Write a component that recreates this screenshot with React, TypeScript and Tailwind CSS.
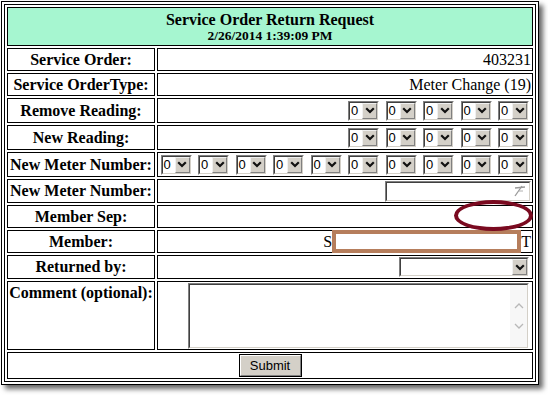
import React from "react";

const serif = { fontFamily: '"Liberation Serif", "Times New Roman", serif' };
const sans = { fontFamily: '"Liberation Sans", Arial, sans-serif' };

function Chevron({ color = "#000" }: { color?: string }) {
  return (
    <svg width="10" height="7" viewBox="0 0 10 7">
      <path d="M1.2 1.2 L5 5 L8.8 1.2" fill="none" stroke={color} strokeWidth="2.2" />
    </svg>
  );
}

function DropBtn() {
  return (
    <div className="flex h-full w-[15px] items-center justify-center border border-t-[#f0f0f0] border-l-[#f0f0f0] border-r-[#808080] border-b-[#808080] bg-[#d4d0c8]">
      <Chevron color="#111" />
    </div>
  );
}

function Inset({ className, children }: { className: string; children?: React.ReactNode }) {
  return (
    <div className={"border border-t-[#808080] border-l-[#808080] border-r-white border-b-white " + className}>
      <div className="flex h-full w-full border border-t-[#404040] border-l-[#404040] border-r-[#d4d0c8] border-b-[#d4d0c8] bg-white">
        {children}
      </div>
    </div>
  );
}

function Sel() {
  return (
    <Inset className="h-[20px] w-[31px] shrink-0">
      <div className="flex flex-1 items-center pl-[1px] text-[13px] leading-none text-black" style={sans}>
        0
      </div>
      <DropBtn />
    </Inset>
  );
}

function Label({ children, top = false }: { children: React.ReactNode; top?: boolean }) {
  return (
    <div
      className={
        "flex justify-center whitespace-nowrap border border-black text-[16px] font-bold leading-none text-black " +
        (top ? "items-start pt-[3px]" : "items-center")
      }
      style={serif}
    >
      {children}
    </div>
  );
}

function Value({ children, className = "" }: { children?: React.ReactNode; className?: string }) {
  return (
    <div
      className={"flex items-center justify-end border border-black text-[16px] leading-none text-black " + className}
      style={serif}
    >
      {children}
    </div>
  );
}

export default function App() {
  return (
    <div className="h-[395px] w-[548px] overflow-hidden bg-white pl-[1px] pt-[1px]">
      <div className="w-[538px] border border-black bg-white p-[2px] shadow-[4px_4px_5px_rgba(0,0,0,0.6)]">
        <div className="border border-black p-[2px]">
          <div className="grid grid-cols-[148px_376px] grid-rows-[39px_23px_23px_25px_25px_25px_24px_23px_23px_24px_69px_27px] gap-[2px]">
            <div
              className="col-span-2 flex flex-col items-center justify-center border border-black bg-[#a6f6d0] text-black"
              style={serif}
            >
              <div className="text-[16px] font-bold leading-[18px]">Service Order Return Request</div>
              <div className="text-[13.5px] font-bold leading-[14px]">2/26/2014 1:39:09 PM</div>
            </div>

            <Label>Service Order:</Label>
            <Value className="pr-[1px]">403231</Value>

            <Label>Service OrderType:</Label>
            <Value className="pr-[1px]">Meter Change (19)</Value>

            <Label>Remove Reading:</Label>
            <Value className="gap-[6.5px] pr-[3px]">
              <Sel />
              <Sel />
              <Sel />
              <Sel />
              <Sel />
            </Value>

            <Label>New Reading:</Label>
            <Value className="gap-[6.5px] pr-[3px]">
              <Sel />
              <Sel />
              <Sel />
              <Sel />
              <Sel />
            </Value>

            <Label>New Meter Number:</Label>
            <Value className="gap-[6.5px] pr-[3px]">
              <Sel />
              <Sel />
              <Sel />
              <Sel />
              <Sel />
              <Sel />
              <Sel />
              <Sel />
              <Sel />
              <Sel />
            </Value>

            <Label>New Meter Number:</Label>
            <Value className="pr-[1px]">
              <Inset className="h-[21px] w-[146px]">
                <div className="flex flex-1 items-center justify-end pr-[3px]">
                  <svg width="16" height="12" viewBox="0 0 16 12">
                    <path d="M5 3 L15 2" stroke="#9a9a9a" strokeWidth="1.3" fill="none" />
                    <path d="M12 1 L5 11" stroke="#9a9a9a" strokeWidth="1.3" fill="none" />
                    <path d="M9 6 L13 6" stroke="#b0b0b0" strokeWidth="1" fill="none" />
                  </svg>
                </div>
              </Inset>
            </Value>

            <Label>Member Sep:</Label>
            <Value className="relative">
              <div className="absolute left-[296px] top-[-6px] h-[31px] w-[79px] rounded-[50%] border-[4px] border-[#7a0a20]" />
            </Value>

            <Label>Member:</Label>
            <Value className="items-stretch pr-[1px]">
              <span className="self-center">S</span>
              <div className="my-[-1px] w-[189px] border-[4px] border-[#b67e5c] bg-white" />
              <span className="self-center">T</span>
            </Value>

            <Label>Returned by:</Label>
            <Value className="pr-[3px]">
              <Inset className="h-[20px] w-[130px]">
                <div className="flex-1" />
                <DropBtn />
              </Inset>
            </Value>

            <Label top>Comment (optional):</Label>
            <Value className="items-start pr-[3px] pt-[1px]">
              <Inset className="h-[66px] w-[341px]">
                <div className="flex-1" />
                <div className="flex w-[17px] flex-col items-center justify-center gap-[14px] bg-[#f7f7f7]">
                  <svg width="10" height="6" viewBox="0 0 10 6">
                    <path d="M1 5 L5 1 L9 5" fill="none" stroke="#b8b8b8" strokeWidth="1.3" />
                  </svg>
                  <svg width="10" height="6" viewBox="0 0 10 6">
                    <path d="M1 1 L5 5 L9 1" fill="none" stroke="#b8b8b8" strokeWidth="1.3" />
                  </svg>
                </div>
              </Inset>
            </Value>

            <div className="col-span-2 flex items-center justify-center border border-black">
              <div className="h-[23px] w-[63px] border border-black">
                <div className="flex h-full w-full items-center justify-center border border-t-white border-l-white border-r-[#808080] border-b-[#808080] bg-[#d4d0c8] text-[13px] leading-none text-black" style={sans}>
                  Submit
                </div>
              </div>
            </div>
          </div>
        </div>
      </div>
    </div>
  );
}
